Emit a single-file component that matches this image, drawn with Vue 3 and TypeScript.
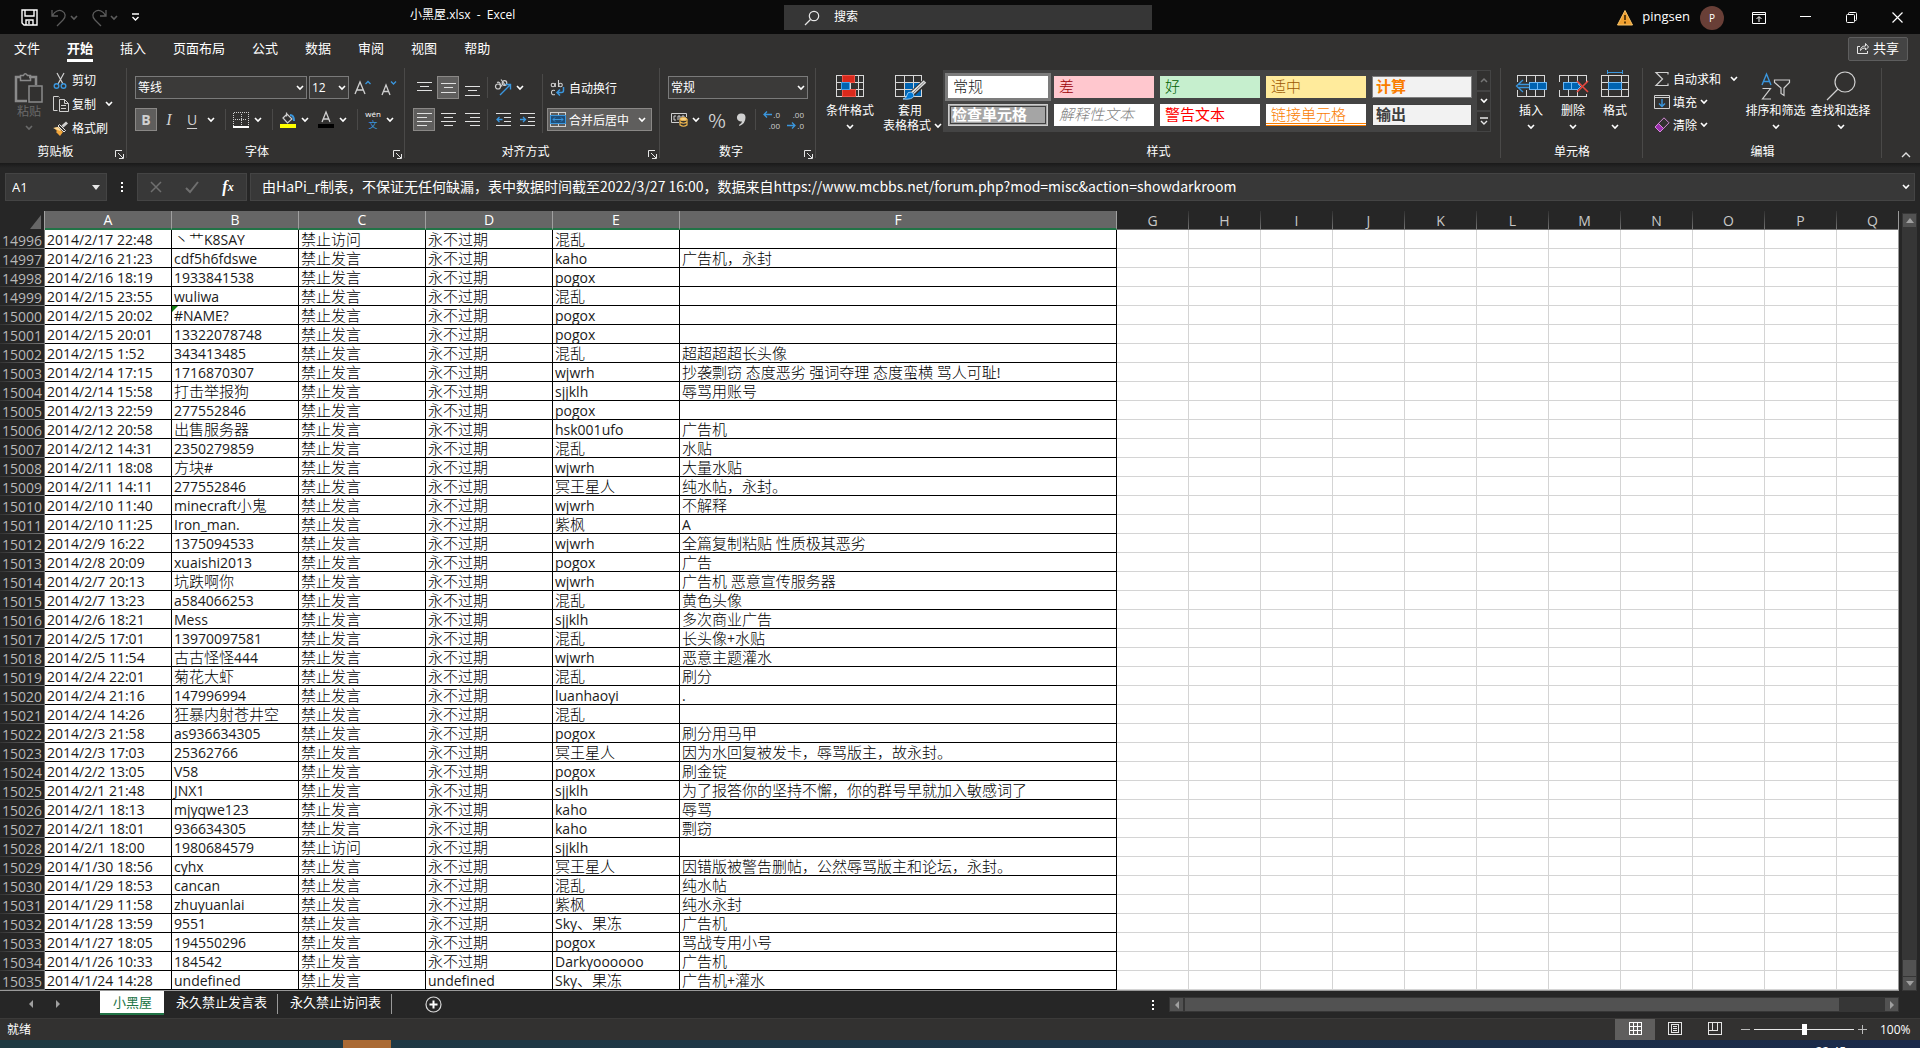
<script setup lang="ts">
import { h, ref } from 'vue'

type Row = [string, string, string, string, string, string]

const Chev = () =>
  h('svg', { width: 8, height: 6, viewBox: '0 0 8 6', fill: 'none', stroke: 'currentColor', 'stroke-width': 1.6 }, [
    h('path', { d: 'M1 1l3 3 3-3' }),
  ])
const Launcher = () =>
  h('svg', { width: 9, height: 9, viewBox: '0 0 9 9', fill: 'none', stroke: '#e6e6e6', 'stroke-width': 1 }, [
    h('path', { d: 'M.5 7V.5H7M3 3l5 5M8.500 4v4.500H4' }),
  ])

const tabs = ['文件', '开始', '插入', '页面布局', '公式', '数据', '审阅', '视图', '帮助']
const selectedCols = ['A', 'B', 'C', 'D', 'E', 'F']
const plainCols = ['G', 'H', 'I', 'J', 'K', 'L', 'M', 'N', 'O', 'P', 'Q']
const cellStyles = [
  { label: '常规', cls: 'normal' },
  { label: '差', cls: 'bad' },
  { label: '好', cls: 'good' },
  { label: '适中', cls: 'neutral' },
  { label: '计算', cls: 'calc' },
  { label: '检查单元格', cls: 'check' },
  { label: '解释性文本', cls: 'explain' },
  { label: '警告文本', cls: 'warn' },
  { label: '链接单元格', cls: 'linked' },
  { label: '输出', cls: 'output' },
]

const firstRow = 14996
const S = '禁止发言'
const V = '禁止访问'
const N = '永不过期'
const rows: Row[] = [
  ['2014/2/17 22:48', '丶艹K8SAY', V, N, '混乱', ''],
  ['2014/2/16 21:23', 'cdf5h6fdswe', S, N, 'kaho', '广告机，永封'],
  ['2014/2/16 18:19', '1933841538', S, N, 'pogox', ''],
  ['2014/2/15 23:55', 'wuliwa', S, N, '混乱', ''],
  ['2014/2/15 20:02', '#NAME?', S, N, 'pogox', ''],
  ['2014/2/15 20:01', '13322078748', S, N, 'pogox', ''],
  ['2014/2/15 1:52', '343413485', S, N, '混乱', '超超超超长头像'],
  ['2014/2/14 17:15', '1716870307', S, N, 'wjwrh', '抄袭剽窃 态度恶劣 强词夺理 态度蛮横 骂人可耻!'],
  ['2014/2/14 15:58', '打击举报狗', S, N, 'sjjklh', '辱骂用账号'],
  ['2014/2/13 22:59', '277552846', S, N, 'pogox', ''],
  ['2014/2/12 20:58', '出售服务器', S, N, 'hsk001ufo', '广告机'],
  ['2014/2/12 14:31', '2350279859', S, N, '混乱', '水贴'],
  ['2014/2/11 18:08', '方块#', S, N, 'wjwrh', '大量水贴'],
  ['2014/2/11 14:11', '277552846', S, N, '冥王星人', '纯水帖，永封。'],
  ['2014/2/10 11:40', 'minecraft小鬼', S, N, 'wjwrh', '不解释'],
  ['2014/2/10 11:25', 'Iron_man.', S, N, '紫枫', 'A'],
  ['2014/2/9 16:22', '1375094533', S, N, 'wjwrh', '全篇复制粘贴 性质极其恶劣'],
  ['2014/2/8 20:09', 'xuaishi2013', S, N, 'pogox', '广告'],
  ['2014/2/7 20:13', '坑跌啊你', S, N, 'wjwrh', '广告机 恶意宣传服务器'],
  ['2014/2/7 13:23', 'a584066253', S, N, '混乱', '黄色头像'],
  ['2014/2/6 18:21', 'Mess', S, N, 'sjjklh', '多次商业广告'],
  ['2014/2/5 17:01', '13970097581', S, N, '混乱', '长头像+水贴'],
  ['2014/2/5 11:54', '古古怪怪444', S, N, 'wjwrh', '恶意主题灌水'],
  ['2014/2/4 22:01', '菊花大虾', S, N, '混乱', '刷分'],
  ['2014/2/4 21:16', '147996994', S, N, 'luanhaoyi', '.'],
  ['2014/2/4 14:26', '狂暴内射苍井空', S, N, '混乱', ''],
  ['2014/2/3 21:58', 'as936634305', S, N, 'pogox', '刷分用马甲'],
  ['2014/2/3 17:03', '25362766', S, N, '冥王星人', '因为水回复被发卡，辱骂版主，故永封。'],
  ['2014/2/2 13:05', 'V58', S, N, 'pogox', '刷金锭'],
  ['2014/2/1 21:48', 'JNX1', S, N, 'sjjklh', '为了报答你的坚持不懈，你的群号早就加入敏感词了'],
  ['2014/2/1 18:13', 'mjyqwe123', S, N, 'kaho', '辱骂'],
  ['2014/2/1 18:01', '936634305', S, N, 'kaho', '剽窃'],
  ['2014/2/1 18:00', '1980684579', V, N, 'sjjklh', ''],
  ['2014/1/30 18:56', 'cyhx', S, N, '冥王星人', '因错版被警告删帖，公然辱骂版主和论坛，永封。'],
  ['2014/1/29 18:53', 'cancan', S, N, '混乱', '纯水帖'],
  ['2014/1/29 11:58', 'zhuyuanlai', S, N, '紫枫', '纯水永封'],
  ['2014/1/28 13:59', '9551', S, N, 'Sky、果冻', '广告机'],
  ['2014/1/27 18:05', '194550296', S, N, 'pogox', '骂战专用小号'],
  ['2014/1/26 10:33', '184542', S, N, 'Darkyoooooo', '广告机'],
  ['2014/1/24 14:28', 'undefined', S, 'undefined', 'Sky、果冻', '广告机+灌水'],
]

// Splits a value into Chinese and Latin runs, which are set at different sizes.
const runs = (text: string) =>
  (text.match(/[\u0000-\u00ff]+|[^\u0000-\u00ff]+/g) ?? []).map((t) => ({ t, wide: t.charCodeAt(0) > 255 }))

const formula = ref(
  '由HaPi_r制表，不保证无任何缺漏，表中数据时间截至2022/3/27 16:00，数据来自https://www.mcbbs.net/forum.php?mod=misc&action=showdarkroom',
)
const zoom = ref(100)
</script>

<template>
  <div class="app">
    <header class="titlebar">
      <div class="quick">
        <button class="ic" aria-label="保存">
          <svg width="17" height="17" viewBox="0 0 17 17" fill="none" stroke="#fff" stroke-width="1.4"><path d="M1 1h15v15H3l-2-2zM4 1v6h9V1M5 16v-5h7v5M8 12v3" /></svg>
        </button>
        <button class="ic dim undo" aria-label="撤消">
          <svg width="16" height="18" viewBox="0 0 16 18" fill="none" stroke="#5c5c5c" stroke-width="1.3"><path d="M1 1v6h6M1.500 6.500C4 2 8 .5 11 2c4 2 4 6 1 9l-6 6" /></svg>
        </button>
        <span class="dim c1"><Chev /></span>
        <button class="ic dim" aria-label="恢复">
          <svg width="16" height="18" viewBox="0 0 16 18" fill="none" stroke="#5c5c5c" stroke-width="1.3"><path d="M15 1v6H9M14.500 6.500C12 2 8 .5 5 2 1 4 1 8 4 11l6 6" /></svg>
        </button>
        <span class="dim c1"><Chev /></span>
        <button class="ic" aria-label="自定义快速访问工具栏">
          <svg width="9" height="9" viewBox="0 0 9 9" fill="none" stroke="#fff" stroke-width="1.4"><path d="M1 1h7M1.500 4l3 3 3-3" /></svg>
        </button>
      </div>
      <div class="doc">小黑屋.xlsx&nbsp; -&nbsp; Excel</div>
      <label class="search">
        <svg width="16" height="16" viewBox="0 0 16 16" fill="none" stroke="#e6e6e6" stroke-width="1.2"><circle cx="10" cy="6" r="4.700" /><path d="M6.500 9.500L1 15" /></svg>
        <input type="text" placeholder="搜索" aria-label="搜索" />
      </label>
      <div class="account">
        <svg width="16" height="16" viewBox="0 0 16 16"><path d="M8 .5L15.500 15H.5z" fill="#f0a030" stroke="#f7c56b" /><path d="M8 5v5M8 11.500v2" stroke="#3a2400" stroke-width="1.600" /></svg>
        <span class="user">pingsen</span>
        <span class="avatar">P</span>
        <button class="win" aria-label="功能区显示选项"><svg width="14" height="12" viewBox="0 0 14 12" fill="none" stroke="#fff"><path d="M.5.5h13v11H.5zM.5 2.500h13M7 10V5M4.500 7L7 4.500 9.500 7" /></svg></button>
        <button class="win" aria-label="最小化"><svg width="11" height="11" viewBox="0 0 11 11" stroke="#fff"><path d="M0 4.500h11" /></svg></button>
        <button class="win" aria-label="向下还原"><svg width="11" height="11" viewBox="0 0 11 11" fill="none" stroke="#fff"><rect x=".5" y="2.500" width="8" height="8" rx="1" /><path d="M2.500 2.500V1.500q0-1 1-1h6q1 0 1 1v6q0 1-1 1h-1" /></svg></button>
        <button class="win" aria-label="关闭"><svg width="11" height="11" viewBox="0 0 11 11" stroke="#fff" stroke-width="1.200"><path d="M.5.5l10 10M10.500.5l-10 10" /></svg></button>
      </div>
    </header>

    <nav class="tabs">
      <button v-for="t in tabs" :key="t" class="tab" :class="{ on: t === '开始' }">{{ t }}</button>
      <button class="share">
        <svg width="12" height="12" viewBox="0 0 12 12" fill="none" stroke="#e6e6e6"><path d="M3 4.500H.5v7h10V9M3.500 8.500c0-3 2-4.500 5-4.500V1.500L11.500 5 8.500 8V6c-2 0-4 .5-5 2.500z" /></svg>
        共享
      </button>
    </nav>

    <div class="ribbon">
      <section class="group g-clip">
        <div class="body">
          <button class="big off">
            <svg width="30" height="32" viewBox="0 0 30 32" fill="none" stroke="#8a8a8a" stroke-width="1.500"><path d="M13 29H2V5h5M15 5h7v8" stroke-width="2.500" /><path d="M6.500 8.500v-5h3q1.500-3.500 4 0h3v5zM15 14h13v16H15z" /></svg>
            <span>粘贴</span><Chev />
          </button>
          <div class="stack">
            <button class="line">
              <svg width="16" height="17" viewBox="0 0 16 17" fill="none"><path d="M4 1l6 11M11 1L5 12" stroke="#d0d0d0" stroke-width="1.200" /><circle cx="3.500" cy="14" r="2.300" stroke="#3a96dd" stroke-width="1.400" /><circle cx="10.500" cy="14" r="2.300" stroke="#3a96dd" stroke-width="1.400" /></svg>
              剪切
            </button>
            <button class="line">
              <svg width="16" height="16" viewBox="0 0 16 16" fill="none" stroke="#d0d0d0"><path d="M4.500 14.500h-4V.5h5l1 1M6.500 3.500h5l4 4v8h-9zM11.500 3.500v4h4M8 9.500h5M8 12.500h5" /></svg>
              复制 <i><Chev /></i>
            </button>
            <button class="line">
              <svg width="16" height="15" viewBox="0 0 16 15"><path d="M1 7l4-1 5 5-3 4-4-4 1-1z" fill="#f2a63c" /><path d="M5 5l6 6 1.500-1.500L6.500 3.500z" fill="none" stroke="#e6e6e6" /><path d="M9.500 5.500L14 1.500" stroke="#d0d0d0" stroke-width="3" /><path d="M0 7l5-1 3 3-1 1z" fill="#fbd999" /></svg>
              格式刷
            </button>
          </div>
        </div>
        <div class="name">剪贴板</div><button class="launch" aria-label="剪贴板设置"><Launcher /></button>
      </section>

      <section class="group g-font">
        <div class="body rows2">
          <div class="row">
            <span class="combo font"><select aria-label="字体"><option>等线</option></select><Chev /></span>
            <span class="combo size"><select aria-label="字号"><option>12</option></select><Chev /></span>
            <button class="t26" aria-label="增大字号"><svg width="18" height="16" viewBox="0 0 18 16" fill="none"><path d="M1 14L6 2l5 12M3 10h6.500" stroke="#d0d0d0" stroke-width="1.300" /><path d="M11.500 4L14 1.500 16.500 4" stroke="#3a96dd" stroke-width="1.300" /></svg></button>
            <button class="t26" aria-label="减小字号"><svg width="18" height="16" viewBox="0 0 18 16" fill="none"><path d="M2 15L6 5l4 10M3.500 11.500h5" stroke="#d0d0d0" stroke-width="1.300" /><path d="M11 1.500L13.500 4 16 1.500" stroke="#3a96dd" stroke-width="1.300" /></svg></button>
          </div>
          <div class="row">
            <button class="t22 on glyph b">B</button>
            <button class="t24 glyph i">I</button>
            <button class="t22 glyph u">U</button><span class="cv"><Chev /></span>
            <i class="sep" />
            <button class="t18" aria-label="边框"><svg width="16" height="16" viewBox="0 0 16 16" fill="none" stroke="#d0d0d0" shape-rendering="crispEdges"><path d="M.5.5h15v14M.5.5v14M8 2v12M2 7.500h12" stroke-dasharray="1 1" /><path d="M0 15h16" stroke="#fff" stroke-width="2" /></svg></button><span class="cv"><Chev /></span>
            <i class="sep" />
            <button class="t18" aria-label="填充颜色"><svg width="16" height="17" viewBox="0 0 16 17"><path d="M6.500 1.500v4M3 7l4-4 5 5-4.500 4z" fill="none" stroke="#d0d0d0" stroke-width="1.200" /><path d="M10 4q4 0 4 6" fill="none" stroke="#3a96dd" stroke-width="2" /><path d="M0 13h16v4H0z" fill="#ff0" /></svg></button><span class="cv"><Chev /></span>
            <button class="t18 gap" aria-label="字体颜色"><svg width="16" height="17" viewBox="0 0 16 17"><path d="M4 11L8 1l4 10M5.500 8h5" fill="none" stroke="#d0d0d0" stroke-width="1.300" /><path d="M0 13h16v4H0z" fill="#000" /></svg></button><span class="cv"><Chev /></span>
            <i class="sep" />
            <button class="t18 pinyin"><span>wén</span><b>文</b></button><span class="cv"><Chev /></span>
          </div>
        </div>
        <div class="name">字体</div><button class="launch" aria-label="字体设置"><Launcher /></button>
      </section>

      <section class="group g-align">
        <div class="body">
          <div class="rows2 in">
            <div class="row g2">
              <button class="t22" aria-label="顶端对齐"><svg width="15" height="16" viewBox="0 0 15 16" stroke="#e0e0e0"><path d="M0 2.500h15M3 6.500h9M0 10.500h15" /></svg></button>
              <button class="t22 on" aria-label="垂直居中"><svg width="15" height="16" viewBox="0 0 15 16" stroke="#e0e0e0"><path d="M0 3.500h15M3 7.500h9M0 12.500h15" /></svg></button>
              <button class="t22" aria-label="底端对齐"><svg width="15" height="16" viewBox="0 0 15 16" stroke="#e0e0e0"><path d="M0 6.500h15M3 10.500h9M0 15.500h15" /></svg></button>
              <i class="sep s2" />
              <button class="t22" aria-label="方向"><svg width="18" height="17" viewBox="0 0 18 17" fill="none"><circle cx="4" cy="7.500" r="2.500" stroke="#d0d0d0" stroke-width="1.200" /><path d="M3 3.500q2-1 3 1l2 3M7 .5l4.500 6" stroke="#d0d0d0" stroke-width="1.200" /><circle cx="10.500" cy="4" r="2.300" stroke="#d0d0d0" stroke-width="1.200" /><path d="M6 16L16 6M11.500 5.500H16.500v5" stroke="#3a96dd" stroke-width="1.400" /></svg></button><span class="cv8"><Chev /></span>
            </div>
            <div class="row g2">
              <button class="t22 on" aria-label="左对齐"><svg width="15" height="13" viewBox="0 0 15 13" stroke="#e0e0e0"><path d="M0 .5h15M0 4.500h10M0 8.500h15M0 12.500h10" /></svg></button>
              <button class="t22" aria-label="居中"><svg width="15" height="13" viewBox="0 0 15 13" stroke="#e0e0e0"><path d="M0 .5h15M3 4.500h9M0 8.500h15M3 12.500h9" /></svg></button>
              <button class="t22" aria-label="右对齐"><svg width="15" height="13" viewBox="0 0 15 13" stroke="#e0e0e0"><path d="M0 .5h15M5 4.500h10M0 8.500h15M5 12.500h10" /></svg></button>
              <i class="sep s2" />
              <button class="t22" aria-label="减少缩进"><svg width="15" height="13" viewBox="0 0 15 13" fill="none" stroke="#e0e0e0"><path d="M0 .5h15M8 4.500h7M8 8.500h7M0 12.500h15" /><path d="M6.500 6.500H1M3.500 4L1 6.500 3.500 9" stroke="#3a96dd" stroke-width="1.300" /></svg></button>
              <button class="t22" aria-label="增加缩进"><svg width="15" height="13" viewBox="0 0 15 13" fill="none" stroke="#e0e0e0"><path d="M0 .5h15M8 4.500h7M8 8.500h7M0 12.500h15" /><path d="M0 6.500h5.500M3 4l2.500 2.500L3 9" stroke="#3a96dd" stroke-width="1.300" /></svg></button>
            </div>
          </div>
          <i class="tall" />
          <div class="rows2 in merge-col">
            <button class="wrap">
              <svg width="16" height="16" viewBox="0 0 16 16" fill="none" stroke="#d0d0d0" stroke-width="1.100"><circle cx="3" cy="5" r="1.800" /><path d="M5.300 3v4M8.500 0v7M5 10.500q-3.500-1-3.500 2t3.500 2" /><circle cx="10.500" cy="5" r="1.800" /><path d="M13.500 7v3.500q0 2-2 2H7.500M10 9.500l-3 3 3 3" stroke="#3a96dd" stroke-width="1.500" /></svg>
              自动换行
            </button>
            <button class="wrap on">
              <svg width="16" height="15" viewBox="0 0 16 15" fill="none" stroke="#d0d0d0" shape-rendering="crispEdges"><path d="M.5.5h15v14H.5zM8 0v4M8 11v4" /><path d="M.5 3.500h15v8H.5z" fill="#1f4e79" stroke="#3a96dd" /><path d="M3 7.500h10M5 5.500l-2 2 2 2M11 5.500l2 2-2 2" stroke="#3a96dd" shape-rendering="auto" /></svg>
              合并后居中 <span class="mc"><Chev /></span>
            </button>
          </div>
        </div>
        <div class="name">对齐方式</div><button class="launch" aria-label="对齐设置"><Launcher /></button>
      </section>

      <section class="group g-num">
        <div class="body rows2">
          <span class="combo"><select aria-label="数字格式"><option>常规</option></select><Chev /></span>
          <div class="row">
            <button class="t22" aria-label="会计数字格式"><svg width="17" height="14" viewBox="0 0 17 14" fill="none"><path d="M8 9.500H.5v-9h15V4" stroke="#d0d0d0" /><path d="M5 3H3v4h2M7 7V3h2v3M13 4V3h-2v1" stroke="#d0d0d0" /><ellipse cx="12.500" cy="6" rx="3.500" ry="1.500" fill="#f7d38a" stroke="#f2b950" /><path d="M9 6v6q3.500 2.500 7 0V6M9 9q3.500 2.500 7 0" stroke="#f2b950" stroke-width="1.200" /></svg></button><span class="cv12"><Chev /></span>
            <button class="t24 glyph pct">%</button>
            <button class="t24" aria-label="千位分隔样式"><svg width="9" height="14" viewBox="0 0 9 14"><path d="M4.500.5a4 4 0 0 1 4 4q0 6-6 8.500l-.5-1q3-1.500 3-3.700A4 4 0 1 1 4.500.5z" fill="#d0d0d0" /></svg></button>
            <i class="sep s2" />
            <button class="t22 dec"><span><svg width="9" height="7" viewBox="0 0 9 7" fill="none" stroke="#3a96dd" stroke-width="1.300"><path d="M9 3.500H1M4 .5l-3 3 3 3" /></svg>.0</span><span>.00</span></button>
            <button class="t24 dec"><span>.00</span><span><svg width="9" height="7" viewBox="0 0 9 7" fill="none" stroke="#3a96dd" stroke-width="1.300"><path d="M0 3.500h8M5 .5l3 3-3 3" /></svg>.0</span></button>
          </div>
        </div>
        <div class="name">数字</div><button class="launch" aria-label="数字设置"><Launcher /></button>
      </section>

      <section class="group g-style">
        <div class="body">
          <button class="big w52">
            <svg width="28" height="28" viewBox="0 0 28 28" fill="none" stroke="#d8d8d8" shape-rendering="crispEdges"><path d="M.5 3.500h27v21H.5zM.5 10.500h27M.5 17.500h27M6.500 3v22M22.500 3v22M14.500 3v22" /><path d="M6.500 3.500h12v7h-12z M6.500 17.500h13v7h-13z" fill="#da291c" stroke="#f0564a" /><path d="M5.500 10.500h8v7h-8z" fill="#0063b1" stroke="#4aa0e6" /></svg>
            <span>条件格式</span><Chev />
          </button>
          <button class="big w60">
            <svg width="31" height="28" viewBox="0 0 31 28" fill="none" stroke="#d8d8d8"><g shape-rendering="crispEdges"><path d="M9.500 10.500h17v14h-17z" fill="#0063b1" stroke="#4aa0e6" /><path d="M.5 3.500h26v21H.5zM.5 10.500h26M.5 17.500h26M9.500 3v22M18.500 3v22" /></g><path d="M30 10L17 22" stroke="#323130" stroke-width="6" /><path d="M30 9.500L17.500 21" stroke="#e0e0e0" stroke-width="3.500" /><path d="M29.500 10L18 21" stroke="#777" /><path d="M8 27q4-1 4-4t4-3q3 1 3 4-2 4-11 3z" fill="#0078d4" stroke="#8fc7f3" /></svg>
            <span>套用</span><span class="two">表格格式 <Chev /></span>
          </button>
          <div class="gallery">
            <div class="swatches">
              <button v-for="s in cellStyles" :key="s.label" class="sw" :class="s.cls">{{ s.label }}</button>
            </div>
            <div class="gscroll">
              <button class="dim" aria-label="上一行"><svg width="8" height="6" viewBox="0 0 8 6" fill="none" stroke="#777" stroke-width="1.500"><path d="M1 5l3-3 3 3" /></svg></button>
              <button aria-label="下一行"><Chev /></button>
              <button aria-label="其他"><svg width="8" height="9" viewBox="0 0 8 9" fill="none" stroke="#e6e6e6" stroke-width="1.400"><path d="M0 1h8M1 4l3 3 3-3" /></svg></button>
            </div>
          </div>
        </div>
        <div class="name">样式</div>
      </section>

      <section class="group g-cell">
        <div class="body">
          <button class="big w42">
            <svg width="32" height="28" viewBox="0 0 32 28" fill="none" stroke="#d8d8d8" shape-rendering="crispEdges"><path d="M2.500 10V3.500h27V10M2.500 18v6.500h27V18M11.500 3v7M20.500 3v7M11.500 18v7M20.500 18v7" /><path d="M14.500 10.500h17v7h-17zM22.500 11v6" fill="#0063b1" stroke="#6ab7f5" /><path d="M14 12.500H3M14 15.500H3M8 8L1.500 14 8 20" stroke="#3a96dd" stroke-width="1.300" shape-rendering="auto" /></svg>
            <span>插入</span><Chev />
          </button>
          <button class="big w42">
            <svg width="32" height="28" viewBox="0 0 32 28" fill="none" stroke="#d8d8d8" shape-rendering="crispEdges"><path d="M2.500 10V3.500h27V10M2.500 18v6.500h27V22M11.500 3v7M20.500 3v7M11.500 18v7M20.500 18v7" /><path d="M6.500 10.500h14l3 4-3 3h-14zM14.500 11v6" fill="#0063b1" stroke="#6ab7f5" /><path d="M20 9l11 11M31 9L20 20" stroke="#e8483f" stroke-width="1.600" shape-rendering="auto" /></svg>
            <span>删除</span><Chev />
          </button>
          <button class="big w42">
            <svg width="32" height="28" viewBox="0 0 32 28" fill="none" stroke="#d8d8d8" shape-rendering="crispEdges"><path d="M2.500 3.500h27v21h-27zM2.500 10.500h27M2.500 17.500h27M9.500 3v22M22.500 3v22" /><path d="M9.500 10.500h13v7h-13z" fill="#0063b1" stroke="#6ab7f5" /><path d="M8.500 0h15M8.500-2v4M23.500-2v4" stroke="#3a96dd" /></svg>
            <span>格式</span><Chev />
          </button>
        </div>
        <div class="name">单元格</div>
      </section>

      <section class="group g-edit">
        <div class="body">
          <div class="stack edit">
            <button class="line"><svg width="16" height="16" viewBox="0 0 16 16" fill="none" stroke="#d0d0d0" stroke-width="1.200"><path d="M14 3.500V1.500H2L8.500 8 2 14.500h12v-2" /></svg>自动求和 <i class="far"><Chev /></i></button>
            <button class="line"><svg width="16" height="14" viewBox="0 0 16 14" fill="none" stroke="#d0d0d0"><path d="M.5.5h15v13H.5zM.5 2.500h15" /><path d="M8 4v7.500M5 8.500l3 3 3-3" stroke="#3a96dd" stroke-width="1.400" /></svg>填充 <i><Chev /></i></button>
            <button class="line"><svg width="16" height="16" viewBox="0 0 16 16" fill="none" stroke="#d68ad9"><path d="M1 10L10 .8l5 5L6 15z" /><path d="M1 10l3.500-3.500 5 5L6 15z" fill="#9b2fae" /></svg>清除 <i><Chev /></i></button>
          </div>
          <button class="big w64">
            <svg width="30" height="28" viewBox="0 0 30 28" fill="none" stroke="#d0d0d0" stroke-width="1.200"><path d="M1 13L5.500 2 10 13M2.500 9.500h6" stroke="#3a96dd" stroke-width="1.400" /><path d="M1.500 16.500h8L1.500 27h8.500" /><path d="M13.500 8h15v2.500L23 16v7.500l-3-2V16l-6.500-5.500z" /></svg>
            <span>排序和筛选</span><Chev />
          </button>
          <button class="big w64">
            <svg width="30" height="28" viewBox="0 0 30 28" fill="none" stroke="#d0d0d0" stroke-width="1.200"><circle cx="19" cy="10" r="10" /><path d="M12 17L1 28" /></svg>
            <span>查找和选择</span><Chev />
          </button>
        </div>
        <div class="name">编辑</div>
      </section>
      <button class="collapse" aria-label="折叠功能区"><svg width="10" height="6" viewBox="0 0 10 6" fill="none" stroke="#e0e0e0" stroke-width="1.400"><path d="M1 5l4-4 4 4" /></svg></button>
    </div>

    <div class="fbar">
      <label class="box nbox"><input type="text" value="A1" aria-label="名称框" /><svg width="8" height="5" viewBox="0 0 8 5"><path d="M0 0h8L4 5z" fill="#e6e6e6" /></svg></label>
      <i class="dots" />
      <div class="box fbtns">
        <button aria-label="取消"><svg width="12" height="12" viewBox="0 0 12 12" stroke="#6f6f6f" stroke-width="1.500"><path d="M1 1l10 10M11 1L1 11" /></svg></button>
        <button aria-label="输入"><svg width="14" height="12" viewBox="0 0 14 12" fill="none" stroke="#6f6f6f" stroke-width="2"><path d="M1 7l4 4 8-10" /></svg></button>
        <button class="fx">f<small>x</small></button>
      </div>
      <label class="box fbox"><input v-model="formula" type="text" aria-label="编辑栏" /><Chev /></label>
    </div>

    <main class="sheet">
      <div class="grid">
        <table>
          <colgroup>
            <col class="c-head" /><col v-for="n in 5" :key="n" class="c-a" /><col class="c-f" /><col v-for="c in plainCols" :key="c" class="c-g" />
          </colgroup>
          <thead>
            <tr>
              <th class="corner"><svg width="11" height="14" viewBox="0 0 11 14"><path d="M11 0v14H0z" fill="#666" /></svg></th>
              <th v-for="c in selectedCols" :key="c" class="sel">{{ c }}</th>
              <th v-for="c in plainCols" :key="c" class="unsel">{{ c }}</th>
            </tr>
          </thead>
          <tbody>
            <tr v-for="(r, i) in rows" :key="i">
              <th class="rn"><div>{{ firstRow + i }}</div></th>
              <td v-for="(v, j) in r" :key="j" class="d" :class="{ err: v === '#NAME?' }">
                <div><span v-for="(p, k) in runs(v)" :key="k" :class="{ wide: p.wide }">{{ p.t }}</span></div>
              </td>
              <td v-for="c in plainCols" :key="c" class="e" />
            </tr>
          </tbody>
        </table>
      </div>
      <div class="vscroll">
        <button aria-label="向上滚动"><svg width="8" height="5" viewBox="0 0 8 5"><path d="M4 0l4 5H0z" fill="#a0a0a0" /></svg></button>
        <div class="vthumb" />
        <button aria-label="向下滚动"><svg width="8" height="5" viewBox="0 0 8 5"><path d="M0 0h8L4 5z" fill="#a0a0a0" /></svg></button>
      </div>
    </main>

    <div class="sheets">
      <button class="nav" aria-label="上一个工作表"><svg width="4" height="8" viewBox="0 0 4 8"><path d="M4 0v8L0 4z" fill="#a0a0a0" /></svg></button>
      <button class="nav" aria-label="下一个工作表"><svg width="4" height="8" viewBox="0 0 4 8"><path d="M0 0v8l4-4z" fill="#a0a0a0" /></svg></button>
      <button class="stab on">小黑屋</button>
      <button class="stab">永久禁止发言表</button>
      <button class="stab">永久禁止访问表</button>
      <button class="add" aria-label="新工作表"><svg width="17" height="17" viewBox="0 0 17 17" fill="none" stroke="#d8d8d8"><circle cx="8.500" cy="8.500" r="7.500" stroke-width="1.200" /><path d="M8.500 4.500v8M4.500 8.500h8" stroke="#fff" stroke-width="2" /></svg></button>
      <i class="dots hd" />
      <div class="hscroll">
        <button aria-label="向左滚动"><svg width="4" height="8" viewBox="0 0 4 8"><path d="M4 0v8L0 4z" fill="#a0a0a0" /></svg></button>
        <div class="hthumb" />
        <button aria-label="向右滚动"><svg width="4" height="8" viewBox="0 0 4 8"><path d="M0 0v8l4-4z" fill="#a0a0a0" /></svg></button>
      </div>
    </div>

    <footer class="status">
      <span class="ready">就绪</span>
      <button class="view on" aria-label="普通"><svg width="13" height="13" viewBox="0 0 13 13" fill="none" stroke="#fff" shape-rendering="crispEdges"><path d="M.5.5h12v12H.5zM4.500 0v13M8.500 0v13M0 4.500h13M0 8.500h13" /></svg></button>
      <button class="view" aria-label="页面布局"><svg width="14" height="13" viewBox="0 0 14 13" fill="none" stroke="#e6e6e6" shape-rendering="crispEdges"><path d="M.5.5h13v12H.5zM3.500 2.500h7v8h-7zM5 4.500h4M5 6.500h4M5 8.500h4" /></svg></button>
      <button class="view" aria-label="分页预览"><svg width="14" height="13" viewBox="0 0 14 13" fill="none" stroke="#e6e6e6" shape-rendering="crispEdges"><path d="M.5.5h13v12H.5zM4.500 0v8M9.500 0v8.500H0" /></svg></button>
      <button class="z" aria-label="缩小"><svg width="9" height="9" viewBox="0 0 9 9" stroke="#bbb"><path d="M0 4.500h9" /></svg></button>
      <input v-model="zoom" class="zoom" type="range" min="10" max="190" aria-label="缩放" />
      <button class="z" aria-label="放大"><svg width="9" height="9" viewBox="0 0 9 9" stroke="#bbb"><path d="M0 4.500h9M4.500 0v9" /></svg></button>
      <span class="pct100">{{ zoom }}%</span>
    </footer>

    <div class="taskbar"><i class="task" /><span class="clock">22:45</span></div>
  </div>
</template>

<style>
body {
  background: #262626;
}
</style>

<style scoped>
.app {
  font-family: 'Open Sans', 'Noto Sans CJK SC', sans-serif;
  font-size: 12px;
  color: #fff;
  background: #262626;
  overflow: hidden;
}
* {
  box-sizing: border-box;
}
button,
input,
select {
  font: inherit;
  color: inherit;
  background: none;
  border: 0;
  padding: 0;
  margin: 0;
  outline: none;
}
button {
  display: flex;
  align-items: center;
  justify-content: center;
  white-space: nowrap;
}
svg {
  flex: none;
  display: block;
  overflow: visible;
}
.dim {
  color: #5c5c5c;
}

/* title bar */
.titlebar {
  display: grid;
  grid-template-columns: 784px minmax(200px, 368px) 1fr;
  height: 34px;
  background: #0a0a0a;
}
.quick {
  grid-area: 1 / 1;
  display: flex;
  align-items: center;
  padding-left: 21px;
  height: 35px;
}
.undo {
  margin-left: 13px;
}
.c1 {
  width: 24px;
  padding-left: 3px;
}
.doc {
  grid-area: 1 / 1;
  justify-self: end;
  width: 374px;
  line-height: 30px;
}
.search {
  display: flex;
  align-items: center;
  gap: 14px;
  margin: 5px 0;
  padding-left: 20px;
  background: #363636;
}
.search input {
  flex: 1;
  min-width: 0;
  height: 22px;
  padding-bottom: 3px;
}
.search input::placeholder {
  color: #fff;
  opacity: 1;
}
.account {
  display: flex;
  align-items: center;
  justify-content: flex-end;
}
.user {
  font-size: 13px;
  line-height: 16px;
  margin: 0 10px 3px 9px;
}
.avatar {
  width: 24px;
  height: 24px;
  margin-right: 12px;
  border-radius: 50%;
  background: #693f37;
  font-size: 10px;
  line-height: 24px;
  text-align: center;
}
.win {
  width: 46px;
  height: 32px;
}

/* ribbon */
.tabs {
  display: flex;
  gap: 1px;
  height: 34px;
  padding-left: 1px;
  background: #323130;
  font-size: 13px;
}
.tab {
  position: relative;
  padding: 0 13px 7px;
}
.tab.on {
  font-weight: 700;
}
.tab.on::after {
  content: '';
  position: absolute;
  left: 13px;
  right: 13px;
  bottom: 6px;
  height: 3px;
  background: #fff;
}
.share {
  width: 60px;
  height: 24px;
  margin: 3px 12px 0 auto;
  gap: 4px;
  padding-bottom: 3px;
  background: #444;
  border: 1px solid #5e5e5e;
  border-radius: 2px;
}
.ribbon {
  display: flex;
  height: 95px;
  background: #323130;
}
.group {
  position: relative;
  flex: none;
  display: flex;
  flex-direction: column;
}
.group::after {
  content: '';
  position: absolute;
  right: 0;
  top: 0;
  height: 90px;
  width: 1px;
  background: #4a4948;
}
.g-clip { width: 127px; }
.g-font { width: 278px; }
.g-align { width: 255px; }
.g-num { width: 156px; }
.g-style { flex: 1; min-width: 0; }
.g-cell { width: 142px; }
.g-edit { width: 239px; }
.body {
  display: flex;
  height: 75px;
}
.name {
  height: 18px;
  line-height: 18px;
  padding: 0 16px 0 0;
  text-align: center;
}
.g-font .name { padding: 0 18px 0 0; }
.g-align .name,
.g-num .name { padding: 0 14px 0 0; }
.g-style .name,
.g-cell .name,
.g-edit .name { padding: 0; }
.launch {
  position: absolute;
  right: 3px;
  top: 82px;
}
.collapse {
  width: 38px;
  height: 6px;
  margin-top: 84px;
  padding-left: 10px;
  flex: none;
}
.big {
  flex-direction: column;
  justify-content: flex-start;
  padding-top: 4px;
  line-height: 15px;
}
.big > svg:first-child {
  margin-bottom: 3px;
}
.big > svg:last-child {
  margin-top: 6px;
}
.big.off {
  color: #6a6a6a;
  width: 58px;
  flex: none;
}
.big.off > svg:first-child {
  margin-bottom: 0;
}
.big.w52 { width: 58px; margin-left: 5px; }
.big.w60 { width: 62px; }
.big.w42 { width: 42px; }
.big.w64 { width: 65px; }
.two {
  display: flex;
  align-items: center;
  gap: 3px;
  padding-left: 5px;
}
.stack {
  display: flex;
  flex-direction: column;
  width: 68px;
  margin-left: -5px;
}
.stack .line {
  height: 24px;
  gap: 3px;
  justify-content: flex-start;
}
.line i {
  margin-left: 6px;
}
.stack.edit {
  width: 89px;
  margin-left: 0;
}
.stack.edit .line {
  height: 23px;
  padding-bottom: 2px;
}
.stack.edit .line i {
  margin-left: 0;
}
.stack.edit .line .far {
  margin-left: 6px;
}
.g-cell .body {
  padding-left: 9px;
}
.g-edit .body {
  padding-left: 11px;
}
.rows2 {
  display: flex;
  flex-direction: column;
  gap: 9px;
  padding: 8px 8px 0;
}
.rows2.in {
  padding: 8px 0 0 8px;
}
.row {
  display: flex;
  align-items: center;
  height: 23px;
}
.row > * {
  flex: none;
}
.row.g2 {
  gap: 2px;
}
.row button {
  height: 23px;
}
.t18 { width: 18px; }
.t18.gap { margin-left: 4px; }
.t22 { width: 22px; }
.t24 { width: 24px; }
.t26 { width: 26px; }
.cv { width: 16px; display: flex; justify-content: center; }
.cv12 { width: 15px; padding-left: 2px; }
.cv8 { width: 8px; }
.on.t22,
.wrap.on {
  background: #5f5e5d;
  border: 1px solid #8a8886;
}
.sep {
  width: 1px;
  height: 21px;
  margin: 0 6px;
  background: #4a4948;
}
.sep.s2 {
  margin: 0 2px;
}
.tall {
  width: 1px;
  height: 59px;
  margin-top: 6px;
  margin-left: 4px;
  background: #4a4948;
}
.glyph { color: #d0d0d0; font-size: 14px; }
.b { font-weight: 700; }
.i { font-family: 'Liberation Serif', serif; font-style: italic; font-size: 16px; }
.u { text-decoration: underline; text-underline-offset: 3px; }
.pct { font-size: 19px; font-family: 'Noto Sans CJK SC', sans-serif; }
.pinyin {
  flex-direction: column;
  font-size: 8px;
  line-height: 11px;
}
.pinyin b {
  font-weight: 400;
  color: #3a96dd;
  font-size: 9px;
  line-height: 12px;
}
.dec {
  flex-direction: column;
  align-items: flex-end;
  font-size: 8px;
  line-height: 11px;
  color: #d0d0d0;
}
.dec span {
  display: flex;
  align-items: center;
  gap: 1px;
}
.combo {
  display: flex;
  align-items: center;
  height: 23px;
  background: #3b3a39;
  border: 1px solid #7a7a7a;
}
.combo select {
  appearance: none;
  flex: 1;
  min-width: 0;
  height: 21px;
  padding: 0 16px 0 2px;
  color: #fff;
}
.combo svg {
  margin: 0 2px 0 -10px;
  pointer-events: none;
}
.combo.font { width: 172px; margin-right: 2px; }
.combo.size { width: 40px; margin-right: 1px; }
.g-align .rows2.in:first-child { width: 133px; }
.g-align .body .merge-col { padding-left: 4px; }
.wrap {
  width: 105px;
  height: 23px;
  gap: 3px;
  padding: 0 3px 0 2px;
  justify-content: flex-start;
  border: 1px solid transparent;
}
.wrap .mc { margin-left: 6px; }

.gallery {
  flex: 1;
  min-width: 0;
  display: flex;
  justify-content: space-between;
  height: 62px;
  margin: 2px 10px 0 2px;
  background: #444;
}
.swatches {
  display: grid;
  grid-template-columns: repeat(5, 100px);
  grid-auto-rows: 22px;
  gap: 6px;
  padding: 6px 5px;
  font-size: 15px;
}
.sw {
  justify-content: flex-start;
  padding: 0 0 3px 5px;
  overflow: hidden;
  font-weight: 300;
}
.normal { background: #fff; color: #222; outline: 3px solid #7c7c7c; }
.bad { background: #ffc7ce; color: #9c0006; }
.good { background: #c6efce; color: #006100; }
.neutral { background: #ffeb9c; color: #9c5700; }
.calc { background: #f2f2f2; color: #fa7d00; font-weight: 700; border: 1px solid #7f7f7f; padding-left: 3px; }
.check { background: #a5a5a5; color: #fff; font-weight: 700; border: 3px double #3f3f3f; outline: 1px solid #ccc; outline-offset: -1px; padding-left: 1px; }
.explain { background: #fff; color: #7f7f7f; font-style: italic; }
.warn { background: #fff; color: #f00; font-weight: 400; }
.linked { background: #fff; color: #fa7d00; border-bottom: 3px double #fa7d00; padding-bottom: 0; }
.output { background: #f2f2f2; color: #3f3f3f; font-weight: 700; border: 1px solid #3f3f3f; padding-left: 3px; }
.gscroll {
  display: grid;
  grid-template-rows: repeat(3, 1fr);
  gap: 2px;
  width: 15px;
  padding: 1px 1px 1px 0;
}
.gscroll button {
  background: #323130;
}

/* formula bar */
.fbar {
  display: flex;
  align-items: center;
  height: 48px;
  padding: 0 5px;
  background: linear-gradient(#1a1a1a, #262626 5px);
}
.box {
  display: flex;
  align-items: center;
  height: 28px;
  background: #383838;
  border: 1px solid #444;
}
.nbox {
  width: 102px;
  padding: 0 6px;
  font-size: 13px;
}
.box input {
  flex: 1;
  min-width: 0;
  height: 24px;
}
.dots {
  width: 2px;
  height: 10px;
  margin: 0 14px;
  background: repeating-linear-gradient(#fff 0 2px, transparent 2px 4px);
}
.fbtns {
  width: 110px;
  margin-right: 3px;
}
.fbtns button {
  flex: 1;
}
.fx {
  font: italic bold 16px 'Liberation Serif', serif;
}
.fx small {
  font-size: 12px;
}
.fbox {
  flex: 1;
  min-width: 0;
  padding: 0 4px 0 11px;
  font-family: 'Noto Sans CJK SC', sans-serif;
  font-size: 14px;
}
.fbox input {
  padding-bottom: 2px;
}

/* grid */
.sheet {
  display: flex;
}
.grid {
  flex: 1;
  min-width: 0;
  overflow: hidden;
  border-right: 1px solid #999;
  border-bottom: 1px solid #999;
}
table {
  width: 1909px;
  table-layout: fixed;
  border-collapse: separate;
  border-spacing: 0;
  font-size: 14px;
}
th,
td {
  padding: 0;
  height: 19px;
  font-weight: 400;
}
.c-head { width: 45px; }
.c-a { width: 127px; }
.c-f { width: 437px; }
.c-g { width: 72px; }
thead th {
  line-height: 16px;
}
.corner svg {
  margin: 2px 3px 0 auto;
}
.corner,
.sel {
  border-right: 1px solid #a0a0a0;
}
.sel {
  padding-top: 1px;
  background: #666;
  border-bottom: 2px solid #217346;
}
.unsel {
  padding-top: 1px;
  color: #c8c8c8;
  border-right: 1px solid;
  border-image: linear-gradient(#2e2e2e, #777) 1;
  border-bottom: 1px solid #999;
}
tbody th {
  color: #b8b8b8;
  background: linear-gradient(90deg, #333, #777) bottom / 100% 1px no-repeat #262626;
  border-right: 1px solid #777;
}
tbody th div,
.d div {
  height: 18px;
  line-height: 19px;
  white-space: nowrap;
  padding: 0 0 0 2px;
}
tbody th div {
  text-align: right;
  padding-right: 2px;
}
.d {
  position: relative;
  background: #fff;
  color: #1a1a1a;
  border-right: 1px solid #000;
  border-bottom: 1px solid #000;
}
.wide {
  font-size: 15px;
  font-weight: 300;
  line-height: 16px;
  color: #000;
}
.err::before {
  content: '';
  position: absolute;
  left: 0;
  top: 0;
  border-top: 6px solid #107c10;
  border-right: 6px solid transparent;
}
.e {
  background: #fff;
  border-right: 1px solid #d4d4d4;
  border-bottom: 1px solid #d4d4d4;
}
.vscroll {
  flex: none;
  display: flex;
  flex-direction: column;
  width: 15px;
  margin: 2px 3px 0;
  padding: 1px;
  background: #363636;
}
.vscroll button,
.hscroll button {
  flex: none;
  width: 13px;
  height: 13px;
  background: #525252;
}
.vthumb {
  height: 16px;
  margin: auto 0 1px;
  background: #525252;
}

/* sheet tabs */
.sheets {
  display: flex;
  align-items: flex-start;
  height: 27px;
  padding-left: 17px;
}
.nav {
  width: 27px;
  height: 25px;
}
.nav + .stab {
  margin-left: 29px;
}
.stab {
  position: relative;
  height: 24px;
  padding: 0 11px 3px 12px;
  font-size: 13px;
}
.stab.on {
  width: 64px;
  background: #fff;
  color: #217346;
  border-bottom: 2px solid #217346;
  padding-bottom: 1px;
}
.stab:not(.on)::after {
  content: '';
  position: absolute;
  right: 0;
  top: 3px;
  height: 20px;
  width: 1px;
  background: #999;
}
.add {
  width: 17px;
  height: 26px;
  margin-left: 33px;
}
.hd {
  margin: 9px 15px 0 auto;
}
.hscroll {
  display: flex;
  width: 730px;
  height: 15px;
  margin: 6px 21px 0 0;
  padding: 1px;
  background: #363636;
}
.hthumb {
  flex: 1;
  margin: 0 46px 0 2px;
  background: #525252;
}

/* status bar */
.status {
  display: flex;
  align-items: center;
  height: 22px;
  background: #323130;
  border-top: 1px solid #3b3a39;
}
.ready {
  margin: 0 auto 2px 7px;
}
.view {
  width: 40px;
  height: 21px;
  padding-bottom: 2px;
}
.view.on {
  background: #5f5e5d;
}
.z {
  width: 17px;
  height: 19px;
}
.view + .z {
  margin-left: 2px;
}
.zoom {
  appearance: none;
  width: 100px;
  height: 19px;
}
.zoom::-webkit-slider-runnable-track {
  height: 1px;
  background: #e6e6e6;
}
.zoom::-webkit-slider-thumb {
  appearance: none;
  width: 5px;
  height: 11px;
  margin-top: -5px;
  background: #fff;
}
.pct100 {
  width: 49px;
  padding-left: 9px;
}
.taskbar {
  display: flex;
  height: 8px;
  padding-left: 343px;
  overflow: hidden;
  background: linear-gradient(90deg, #1f3a42, #1f3648 55%, #1b2a4a);
}
.task {
  width: 48px;
  background: #aa6a34;
}
.clock {
  margin: 3px 74px 0 auto;
}
</style>
